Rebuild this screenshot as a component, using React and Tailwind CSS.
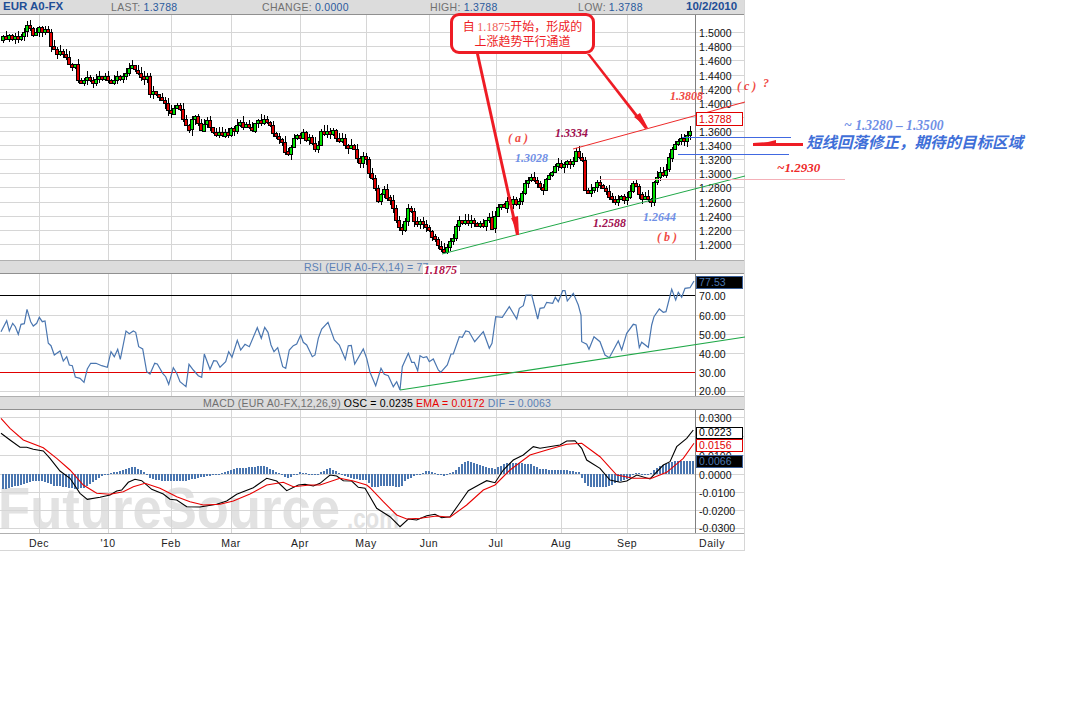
import React from "react";

const BLUE = "#4a76b0";
const PRICE_GRID = [32, 46, 60, 75, 89, 103, 117, 131, 145, 159, 173, 187, 202, 216, 230, 244];
const PRICE_TICKS = ["1.5000", "1.4800", "1.4600", "1.4400", "1.4200", "1.4000", "", "1.3600", "1.3400", "1.3200", "1.3000", "1.2800", "1.2600", "1.2400", "1.2200", "1.2000"];
const MONTH_X = [39, 108, 171, 231, 300, 366, 429, 496, 561, 627];
const MONTHS = ["Dec", "'10", "Feb", "Mar", "Apr", "May", "Jun", "Jul", "Aug", "Sep"];

// traced off the 3x crops: [x, y] in crop units, left part then right part
const left = (pts, top) => pts.map(([x, y]) => [x / 3, top + y / 3]);
const right = (pts, top) => pts.map(([x, y]) => [370 + x / 3, top + y / 3]);

const PRICE = [
  ...left([[3,120],[15,110],[40,118],[65,110],[82,70],[95,97],[115,85],[145,90],[150,130],[165,160],[190,155],[205,190],[225,200],[228,240],[250,255],[265,235],[300,232],[330,240],[345,228],[370,235],[380,205],[410,205],[418,232],[440,240],[445,290],[470,280],[490,305],[510,340],[525,320],[540,335],[550,380],[570,385],[575,355],[600,390],[620,360],[630,395],[655,410],[690,390],[720,375],[750,390],[775,360],[805,360],[820,405],[845,420],[855,462],[875,425],[905,400],[930,430],[945,450],[960,395],[990,385],[1010,420],[1040,440],[1060,440],[1070,485],[1095,465],[1108,530]], 0),
  ...right([[0,530],[20,600],[40,570],[60,605],[75,655],[95,700],[110,615],[130,660],[170,680],[205,740],[225,745],[245,710],[265,665],[300,655],[320,680],[350,655],[365,690],[378,625],[410,600],[440,610],[465,540],[500,535],[510,575],[530,525],[575,490],[605,490],[615,460],[635,485],[640,560],[660,575],[680,548],[700,560],[720,600],[770,590],[790,545],[810,590],[840,595],[855,525],[885,510],[905,435],[935,425],[945,400],[965,390],[972,355]], 0),
];

const RSI = [
  ...left([[3,230],[20,197],[28,228],[38,205],[46,215],[55,238],[63,208],[73,206],[81,163],[92,200],[100,213],[110,205],[118,187],[127,200],[135,198],[145,265],[153,272],[163,300],[180,288],[190,318],[200,305],[208,330],[217,332],[226,366],[240,370],[252,382],[262,342],[272,325],[288,325],[305,332],[322,337],[333,290],[343,305],[353,283],[361,313],[378,228],[388,236],[400,228],[407,232],[416,275],[428,282],[440,350],[450,357],[464,325],[472,327],[488,355],[497,365],[506,388],[520,338],[530,355],[540,380],[558,395],[567,328],[580,345],[595,362],[605,367],[613,297],[630,343],[641,317],[650,318],[660,337],[677,320],[686,290],[696,307],[712,256],[722,285],[735,268],[748,275],[772,218],[784,250],[794,217],[804,232],[813,270],[822,290],[833,278],[848,335],[857,340],[868,285],[880,272],[890,267],[902,240],[910,262],[920,270],[937,305],[945,300],[955,250],[965,222],[984,202],[1003,255],[1018,270],[1036,313],[1045,272],[1054,271],[1064,327],[1090,282],[1100,310]], 255),
  ...right([[0,352],[17,392],[33,340],[43,358],[55,362],[70,395],[80,380],[90,405],[97,335],[115,295],[125,322],[133,322],[143,347],[150,302],[160,308],[170,305],[178,320],[190,312],[205,345],[212,352],[232,330],[243,297],[250,297],[268,245],[277,247],[287,228],[297,230],[314,260],[340,230],[358,280],[366,265],[377,185],[397,187],[418,155],[440,192],[448,160],[460,152],[468,120],[485,120],[503,192],[510,160],[522,158],[530,142],[548,145],[556,127],[565,140],[578,107],[585,107],[592,138],[610,115],[625,150],[633,180],[635,260],[650,268],[657,283],[672,245],[690,260],[705,300],[718,308],[745,258],[755,285],[770,235],[790,208],[798,210],[808,278],[815,262],[835,277],[845,210],[852,185],[868,162],[880,172],[888,170],[905,103],[917,135],[925,112],[935,127],[945,100],[960,98],[972,78]], 255),
];

const MACD_BLACK = [
  ...left([[3,115],[30,135],[60,157],[80,157],[100,163],[130,168],[150,190],[180,228],[210,250],[240,295],[262,313],[300,307],[330,300],[350,288],[365,285],[385,262],[405,253],[425,257],[455,283],[490,297],[510,313],[530,315],[560,335],[600,336],[650,328],[680,318],[710,298],[760,278],[800,250],[830,258],[860,287],[895,270],[915,268],[940,273],[960,265],[990,240],[1010,243],[1030,257],[1055,258],[1075,277],[1095,280]], 395),
  ...right([[0,305],[20,340],[60,365],[90,395],[115,372],[140,375],[170,362],[195,358],[215,368],[240,365],[265,330],[295,287],[330,268],[350,257],[375,263],[400,225],[430,195],[460,180],[490,155],[510,160],[570,150],[590,138],[615,137],[635,160],[650,195],[690,220],[720,255],[750,262],[770,258],[800,240],[840,252],[880,210],[900,200],[920,155],[950,130],[970,105]], 395),
];

const MACD_RED = [
  ...left([[3,70],[30,100],[70,135],[130,158],[170,190],[210,225],[250,270],[290,295],[330,298],[370,290],[400,275],[435,265],[480,280],[530,305],[570,320],[610,330],[660,328],[700,318],[750,297],[800,270],[850,262],[880,275],[930,270],[960,270],[1020,250],[1060,258],[1100,270]], 395),
  ...right([[0,278],[40,320],[80,360],[110,372],[150,370],[200,363],[240,367],[290,330],[340,285],[375,270],[420,225],[480,180],[530,165],[590,148],[635,145],[690,185],[740,240],[790,250],[845,250],[890,232],[940,190],[972,145]], 395),
];

// histogram height in crop units, up is positive
const HIST = [
  ...[[3,-47],[30,-40],[70,-30],[100,-20],[130,-22],[160,-35],[190,-38],[220,-45],[250,-42],[280,-20],[310,-3],[330,3],[360,10],[400,22],[430,5],[450,-15],[500,-22],[550,-22],[600,-10],[640,-2],[680,8],[710,18],[750,20],[790,25],[820,10],[860,-12],[900,6],[940,-5],[985,18],[1030,-5],[1070,-17],[1100,-20]].map(([x, h]) => [x / 3, h / 3]),
  ...[[0,-40],[50,-35],[90,-40],[105,-18],[130,-6],[170,10],[220,-5],[250,8],[285,40],[320,28],[370,15],[410,35],[480,30],[510,14],[580,12],[625,5],[640,-25],[655,-38],[710,-38],[740,-25],[770,-15],[800,5],[830,-5],[860,20],[910,38],[970,40]].map(([x, h]) => [370 + x / 3, h / 3]),
];

const FLAGS = [
  { y: 112, h: 14, text: "1.3788", border: "#e00000", fill: "#fff", color: "#e00000" },
  { y: 276, h: 13, text: "77.53", border: "#3a5f98", fill: "#000", color: "#4a76b0" },
  { y: 427, h: 12, text: "0.0223", border: "#000", fill: "#fff", color: "#000" },
  { y: 439, h: 13, text: "0.0156", border: "#e00000", fill: "#fff", color: "#e00000" },
  { y: 455, h: 13, text: "0.0066", border: "#3a5f98", fill: "#000", color: "#4a76b0" },
];

const NOTES = [
  { x: 670, y: 100, text: "1.3808", color: "#ef4a44" },
  { x: 737, y: 90, text: "( c )", color: "#ef4a44" },
  { x: 763, y: 87, text: "?", color: "#ef4a44" },
  { x: 508, y: 142, text: "( a )", color: "#ef4a44" },
  { x: 555, y: 137, text: "1.3334", color: "#a01050" },
  { x: 515, y: 162, text: "1.3028", color: "#6f8fe6" },
  { x: 593, y: 227, text: "1.2588", color: "#a01050" },
  { x: 643, y: 221, text: "1.2644", color: "#6f8fe6" },
  { x: 657, y: 241, text: "( b )", color: "#ef4a44" },
  { x: 777, y: 172, text: "~1.2930", color: "#ee2a2a", size: 13 },
  { x: 844, y: 130, text: "~ 1.3280 – 1.3500", color: "#6f8fe6", size: 13.6 },
];

function interp(pts, x) {
  if (x <= pts[0][0]) return pts[0][1];
  for (let i = 1; i < pts.length; i++) {
    if (x <= pts[i][0]) {
      const [x0, y0] = pts[i - 1];
      const [x1, y1] = pts[i];
      return y0 + ((y1 - y0) * (x - x0)) / (x1 - x0 || 1);
    }
  }
  return pts[pts.length - 1][1];
}

const noise = (i) => {
  const v = Math.sin(i * 12.9898) * 43758.5453;
  return v - Math.floor(v);
};

const toPoints = (pts) => pts.map(([x, y]) => `${x.toFixed(1)},${y.toFixed(1)}`).join(" ");

function buildCandles() {
  const out = [];
  let prev = interp(PRICE, 1);
  let i = 0;
  for (let x = 2; x <= 690; x += 3) {
    const target = interp(PRICE, x) + (noise(i) - 0.5) * 6;
    let close = target;
    if (Math.abs(close - prev) < 3) close = prev + (target < prev ? -3 : 3);
    const top = Math.min(prev, close);
    const bottom = Math.max(prev, close);
    out.push({
      x,
      top: Math.round(top),
      h: Math.max(2, Math.round(bottom - top)),
      hi: Math.round(top - noise(i + 100) * 6),
      lo: Math.round(bottom + noise(i + 200) * 6),
      up: close < prev,
    });
    prev = close;
    i++;
  }
  return out;
}

function buildHist() {
  const out = [];
  for (let x = 2; x <= 692; x += 3) out.push({ x, h: Math.round(interp(HIST, x)) });
  return out;
}

const CANDLES = buildCandles();
const BARS = buildHist();

function Grid({ rows, top, bottom }) {
  return (
    <g stroke="#d6d6d6" strokeWidth="1" shapeRendering="crispEdges">
      {rows.map((y) => (
        <line key={y} x1="0" x2="745" y1={y + 0.5} y2={y + 0.5} />
      ))}
      {MONTH_X.map((x) => (
        <line key={x} x1={x + 0.5} x2={x + 0.5} y1={top} y2={bottom} />
      ))}
    </g>
  );
}

function Ticks({ items }) {
  return (
    <g fill="#111" fontSize="10.5" letterSpacing="0.1">
      {items.map(([label, y]) => (
        <text key={label} x="699" y={y}>{label}</text>
      ))}
    </g>
  );
}

function PricePanel() {
  return (
    <svg width="745" height="245" viewBox="0 15 745 245" className="block">
      <Grid rows={PRICE_GRID} top={15} bottom={260} />
      {CANDLES.map((c, i) => (
        <g key={i} shapeRendering="crispEdges">
          <line x1={c.x + 1.5} x2={c.x + 1.5} y1={c.hi} y2={c.lo} stroke="#000" />
          <rect x={c.x - 0.5} y={c.top + 0.5} width="3" height={c.h} fill={c.up ? "#00e000" : "#e00000"} stroke="#000" />
        </g>
      ))}
      <line x1="695.5" x2="695.5" y1="15" y2="260" stroke="#808080" shapeRendering="crispEdges" />
      <Ticks items={PRICE_TICKS.filter(Boolean).map((t) => [t, PRICE_GRID[PRICE_TICKS.indexOf(t)] + 5])} />
    </svg>
  );
}

function RsiPanel() {
  return (
    <svg width="745" height="122" viewBox="0 274 745 122" className="block">
      <Grid rows={[315, 334, 353, 391]} top={274} bottom={396} />
      <line x1="0" x2="695" y1="295.5" y2="295.5" stroke="#000" shapeRendering="crispEdges" />
      <line x1="0" x2="695" y1="372.5" y2="372.5" stroke="#e00000" shapeRendering="crispEdges" />
      <polyline points={toPoints(RSI)} fill="none" stroke={BLUE} strokeWidth="1.2" />
      <line x1="695.5" x2="695.5" y1="274" y2="396" stroke="#808080" shapeRendering="crispEdges" />
      <Ticks items={[["70.00", 300], ["60.00", 320], ["50.00", 339], ["40.00", 358], ["30.00", 377], ["20.00", 395]]} />
    </svg>
  );
}

function MacdPanel() {
  return (
    <svg width="745" height="123" viewBox="0 410 745 123" className="block">
      <text x="-2" y="528" fill="#e2e2e2" fontSize="58" fontWeight="700" textLength="342" lengthAdjust="spacingAndGlyphs">FutureSource</text>
      <text x="347" y="528" fill="#e2e2e2" fontSize="27" fontWeight="700" textLength="52" lengthAdjust="spacingAndGlyphs">.com</text>
      <Grid rows={[417, 436, 455, 474, 492, 510, 528]} top={410} bottom={533} />
      <g fill={BLUE} shapeRendering="crispEdges">
        {BARS.map((b, i) => (
          <rect key={i} x={b.x} y={b.h > 0 ? 474 - b.h : 474} width="2" height={Math.max(1, Math.abs(b.h))} />
        ))}
      </g>
      <polyline points={toPoints(MACD_BLACK)} fill="none" stroke="#000" strokeWidth="1.1" />
      <polyline points={toPoints(MACD_RED)} fill="none" stroke="#e80000" strokeWidth="1.1" />
      <line x1="695.5" x2="695.5" y1="410" y2="533" stroke="#808080" shapeRendering="crispEdges" />
      <Ticks items={[["0.0300", 422], ["0.0200", 441], ["0.0100", 460], ["0.0000", 479], ["-0.0100", 497], ["-0.0200", 515], ["-0.0300", 532]]} />
    </svg>
  );
}

function DateAxis() {
  return (
    <svg width="745" height="16" viewBox="0 533 745 16" className="block">
      <g fill="#222" fontSize="10.5" letterSpacing="0.5" textAnchor="middle">
        {MONTHS.map((m, i) => (
          <text key={m} x={MONTH_X[i]} y="546">{m}</text>
        ))}
        <text x="712" y="546">Daily</text>
      </g>
    </svg>
  );
}

function Stat({ label, value, className }) {
  return (
    <div className={`flex gap-[3px] text-[10.5px] tracking-[0.3px] ${className}`}>
      <span className="text-[#707070]">{label}</span>
      <span className="text-[#2a5a9c]">{value}</span>
    </div>
  );
}

// everything drawn on top of the chart image by hand
function Markup() {
  return (
    <svg width="1071" height="727" viewBox="0 0 1071 727" className="absolute left-0 top-0">
      <line x1="573" y1="149" x2="745" y2="102" stroke="#ee2a2a" strokeWidth="1" />
      <line x1="442" y1="254" x2="745" y2="176" stroke="#20a848" strokeWidth="1" />
      <line x1="400" y1="390" x2="745" y2="337" stroke="#20a848" strokeWidth="1.2" />
      <line x1="682" y1="137.5" x2="791" y2="137.5" stroke="#4169e1" shapeRendering="crispEdges" />
      <line x1="678" y1="154.5" x2="789" y2="154.5" stroke="#4169e1" shapeRendering="crispEdges" />
      <line x1="600" y1="179.5" x2="845" y2="179.5" stroke="#f4b0b8" shapeRendering="crispEdges" />
      <polygon points="476,54 479,54 519,235 516,235" fill="#ee1c25" />
      <polygon points="511,218 518,216 519,235" fill="#ee1c25" />
      <polygon points="587,54 590,54 648,128 645,129" fill="#ee1c25" />
      <polygon points="634,117 640,113 648,128" fill="#ee1c25" />
      <polygon points="753,143 768,142 776,140 776,143 803,143 803,146 753,146" fill="#ee1c25" />

      {FLAGS.map((f) => (
        <g key={f.text}>
          <rect x="696.5" y={f.y + 0.5} width="46" height={f.h - 1} fill={f.fill} stroke={f.border} shapeRendering="crispEdges" />
          <text x="699" y={f.y + f.h - 3} fill={f.color} fontSize="10.5" letterSpacing="0.1">{f.text}</text>
        </g>
      ))}

      <g fontFamily="'Liberation Serif', serif" fontWeight="700" fontStyle="italic">
        <rect x="423" y="265" width="37" height="10" fill="#fff" />
        <text x="424" y="274" fontSize="12" fill="#b01048">1.1875</text>
        {NOTES.map((n) => (
          <text key={n.text} x={n.x} y={n.y} fontSize={n.size || 12} fill={n.color}>{n.text}</text>
        ))}
      </g>
      <text x="806" y="148" fontFamily="'Noto Sans CJK SC', sans-serif" fontSize="15.5" fontWeight="700" fontStyle="italic" fill="#3f6fd8">短线回落修正，期待的目标区域</text>
    </svg>
  );
}

export default function App() {
  return (
    <div className="relative h-[727px] w-[1071px] overflow-hidden bg-white font-['Liberation_Sans',sans-serif]">
      <div className="w-[745px] border-r border-[#d6d6d6]">
        <div className="flex h-[15px] items-center border-b border-[#909090] bg-[#dcdcdc] leading-none">
          <div className="w-[111px] pl-[3px] text-[11.5px] font-bold text-[#1f4e96]">EUR A0-FX</div>
          <Stat label="LAST:" value="1.3788" className="w-[151px]" />
          <Stat label="CHANGE:" value="0.0000" className="w-[168px]" />
          <Stat label="HIGH:" value="1.3788" className="w-[148px]" />
          <Stat label="LOW:" value="1.3788" className="w-[108px]" />
          <div className="text-[11.5px] font-bold text-[#1f4e96]">10/2/2010</div>
        </div>
        <PricePanel />
        <div className="flex h-[14px] items-center border-y border-t-[#b0b0b0] border-b-[#909090] bg-[#dcdcdc] pl-[304px] text-[10.5px] leading-none tracking-[0.2px] text-[#5a7fb5]">
          RSI (EUR A0-FX,14) = 77.
        </div>
        <RsiPanel />
        <div className="flex h-[14px] items-center gap-[3px] border-y border-t-[#b0b0b0] border-b-[#909090] bg-[#dcdcdc] pl-[203px] text-[10.5px] leading-none tracking-[0.2px]">
          <span className="text-[#707070]">MACD (EUR A0-FX,12,26,9)</span>
          <span className="text-black">OSC = 0.0235</span>
          <span className="text-[#e80000]">EMA = 0.0172</span>
          <span className="text-[#5a7fb5]">DIF = 0.0063</span>
        </div>
        <MacdPanel />
        <div className="border-y border-t-[#b0b0b0] border-b-[#d6d6d6]">
          <DateAxis />
        </div>
      </div>
      <Markup />
      <div className="absolute left-[450px] top-[13px] flex h-[41px] w-[145px] flex-col items-center justify-center rounded-[9px] border-[3px] border-[#ee1c25] bg-white text-[12px] leading-[14px] text-[#ee1c25] font-['Noto_Sans_CJK_SC',sans-serif]">
        <div>
          自 <span className="text-[#f0605a] font-['Liberation_Serif',serif]">1.1875</span>开始，形成的
        </div>
        <div>上涨趋势平行通道</div>
      </div>
    </div>
  );
}
